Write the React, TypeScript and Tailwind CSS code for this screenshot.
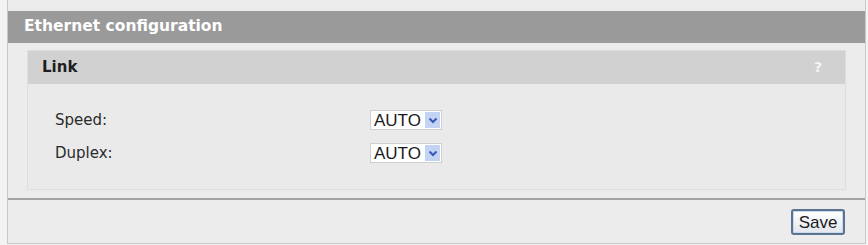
import React from "react";

const Select: React.FC<{ value: string }> = ({ value }) => (
  <div className="flex h-[20px] w-[72px] items-stretch border border-[#cfcfcf] bg-white">
    <div className="flex flex-1 items-center pl-[3px] font-['Liberation_Sans',Arial,sans-serif] text-[17px] leading-none text-[#1a1a1a]">
      {value}
    </div>
    <div className="m-[1px] flex w-[15px] items-center justify-center bg-[#c3d3f4]">
      <svg width="10" height="7" viewBox="0 0 10 7">
        <path d="M1.5 1.5 L5 5 L8.5 1.5" fill="none" stroke="#3656b8" strokeWidth="2" />
      </svg>
    </div>
  </div>
);

export default function App() {
  return (
    <div className="h-[245px] w-[868px] bg-[#f3f3f3] pl-[7px] pr-[2px] font-['DejaVu_Sans',Verdana,sans-serif]">
      <div className="flex h-[244px] flex-col border-x border-b border-[#c8c8c8] bg-[#ececec] pt-[11px]">
        <div className="flex h-[32px] items-center bg-[#9a9a9a] pl-[16px] text-[15.5px] font-bold text-white">
          Ethernet configuration
        </div>
        <div className="mx-[19px] mt-[7px] border border-[#dedede] bg-[#eaeaea]">
          <div className="flex h-[33px] items-center justify-between bg-[#d1d1d1] pl-[14px] pr-[23px]">
            <span className="text-[15px] font-bold text-[#1e1e1e]">Link</span>
            <span className="text-[14px] font-bold text-[#f4f4f4]">?</span>
          </div>
          <div className="flex flex-col gap-[7px] pb-[23px] pl-[27px] pt-[23px] text-[15px] text-[#2a2a2a]">
            <div className="flex h-[26px] items-center">
              <span className="w-[315px]">Speed:</span>
              <Select value="AUTO" />
            </div>
            <div className="flex h-[26px] items-center">
              <span className="w-[315px]">Duplex:</span>
              <Select value="AUTO" />
            </div>
          </div>
        </div>
        <div className="mt-[8px] h-[2px] bg-[#a3a3a3]" />
        <div className="flex flex-1 items-start justify-end pr-[20px] pt-[9px]">
          <button className="flex h-[26px] w-[54px] items-center justify-center rounded-[3px] border-2 border-[#5a7390] bg-gradient-to-b from-[#ffffff] to-[#e2e7ee] font-['Liberation_Sans',Arial,sans-serif] text-[17px] leading-none text-[#1a1a1a] shadow-[inset_0_0_0_1px_#c9d8ea]">
            Save
          </button>
        </div>
      </div>
    </div>
  );
}
